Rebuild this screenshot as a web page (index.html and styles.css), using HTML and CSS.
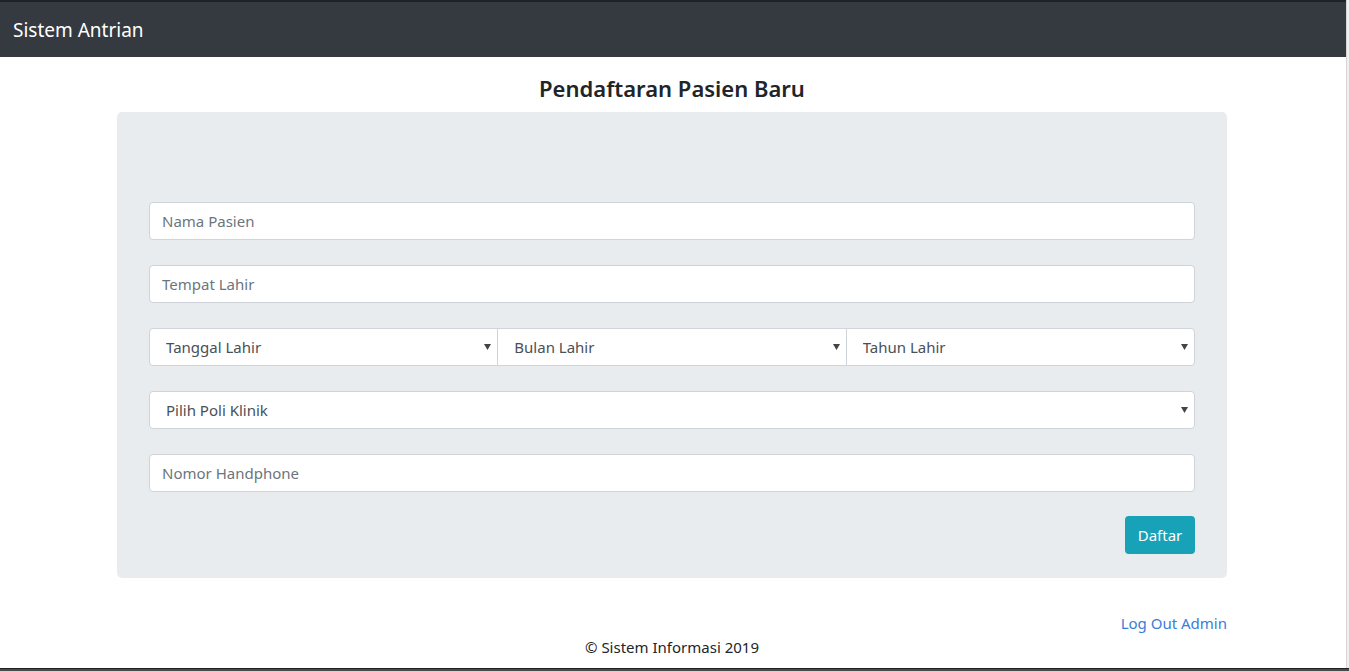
FILE: index.html
```html
<!DOCTYPE html>
<html lang="id">
<head>
<meta charset="utf-8">
<title>Sistem Antrian</title>
<link rel="stylesheet" href="styles.css">
</head>
<body>
<div class="frame">
  <div class="page">
    <nav class="navbar"><span class="brand">Sistem Antrian</span></nav>
    <main class="container">
      <h3 class="title">Pendaftaran Pasien Baru</h3>
      <div class="jumbotron">
        <form class="form">
          <input class="field" type="text" placeholder="Nama Pasien">
          <input class="field" type="text" placeholder="Tempat Lahir">
          <div class="select-group">
            <select class="field select"><option>Tanggal Lahir</option></select>
            <select class="field select"><option>Bulan Lahir</option></select>
            <select class="field select"><option>Tahun Lahir</option></select>
          </div>
          <select class="field select"><option>Pilih Poli Klinik</option></select>
          <input class="field" type="text" placeholder="Nomor Handphone">
          <div class="actions"><button class="btn" type="button">Daftar</button></div>
        </form>
      </div>
      <div class="logout"><a href="#" class="link">Log Out Admin</a></div>
      <footer class="footer">© Sistem Informasi 2019</footer>
    </main>
  </div>
  <div class="scrollbar"></div>
</div>
<div class="taskbar"></div>
</body>
</html>
```
FILE: styles.css
```css
* { box-sizing: border-box; }
html, body { margin: 0; padding: 0; }
body {
  font-family: "Noto Sans", "Open Sans", sans-serif;
  color: #212529;
  background: #fff;
  height: 671px;
  overflow: hidden;
}
.frame { display: flex; height: 668px; }
.page { flex: 1; display: flex; flex-direction: column; min-width: 0; }
.scrollbar {
  width: 3px;
  background: #f0f0f0;
  border-left: 1px solid #d6d6d6;
}
.taskbar { height: 3px; background: #4a4a4a; border-top: 1px solid #222; }

.navbar {
  height: 57px;
  background: #343a40;
  border-top: 2px solid #1f2226;
  display: flex;
  align-items: center;
  padding: 0 13px;
}
.brand { color: #fff; font-size: 19px; line-height: 24px; }

.container {
  width: 1110px;
  margin-left: calc((100% - 1112px) / 2);
  display: flex;
  flex-direction: column;
}
.title {
  margin: 14px 0 7px;
  font-size: 22px;
  line-height: 34px;
  font-weight: 600;
  text-align: center;
  color: #212529;
}
.jumbotron {
  background: #e9ecef;
  border-radius: 5px;
  padding: 90px 32px 24px;
}
.form { display: flex; flex-direction: column; gap: 25px; }
.field {
  height: 38px;
  width: 100%;
  border: 1px solid #ced4da;
  border-radius: 4px;
  background: #fff;
  font-family: inherit;
  font-size: 15px;
  color: #495057;
  padding: 0 12px;
  outline: none;
}
.field::placeholder { color: #6c757d; }
.select {
  appearance: none;
  -webkit-appearance: none;
  padding-left: 16px;
  background-image: url("data:image/svg+xml;utf8,<svg xmlns='http://www.w3.org/2000/svg' width='7' height='6'><path d='M0 0H7L3.5 6Z' fill='%23444'/></svg>");
  background-repeat: no-repeat;
  background-position: right 6px center;
}
.select-group { display: flex; }
.select-group .select { flex: 1; border-radius: 0; }
.select-group .select + .select { margin-left: -1px; }
.select-group .select:first-child { border-radius: 4px 0 0 4px; }
.select-group .select:last-child { border-radius: 0 4px 4px 0; }
.actions { display: flex; justify-content: flex-end; margin-top: -1px; }
.btn {
  height: 38px;
  width: 70px;
  border: none;
  border-radius: 4px;
  background: #17a2b8;
  color: #fff;
  font-family: inherit;
  font-size: 15px;
}
.logout { display: flex; justify-content: flex-end; margin-top: 33px; line-height: 24px; }
.link { color: #3a7dd8; text-decoration: none; font-size: 15px; }
.footer { text-align: center; font-size: 15px; line-height: 24px; }
```
